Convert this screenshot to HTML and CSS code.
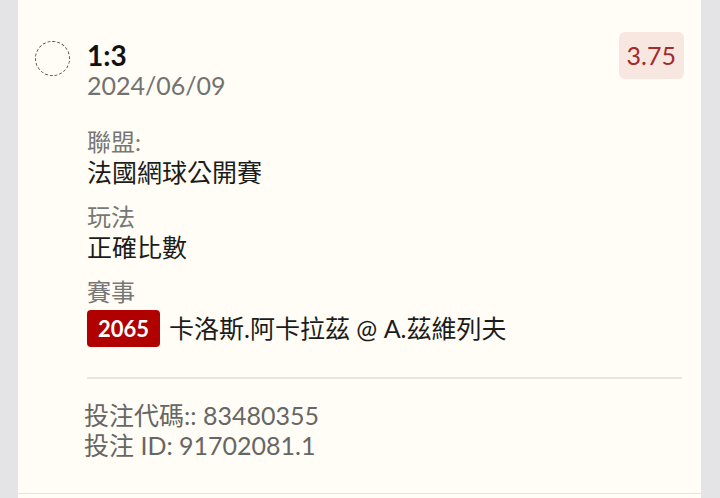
FILE: index.html
```html
<!DOCTYPE html>
<html lang="zh-Hant">
<head>
  <meta charset="UTF-8" />
  <meta name="viewport" content="width=device-width, initial-scale=1.0"/>
  <title>投注紀錄</title>
  <link rel="stylesheet" href="styles.css">
</head>
<body>

  <div class="bet-card">
    <div class="bet-head">
      <div class="check"></div>
      <div class="bet-title">
        <div class="score">1:3</div>
        <div class="date">2024/06/09</div>
      </div>
      <div class="odds">3.75</div>
    </div>

    <div class="fields">
      <div class="field">
        <div class="label">聯盟:</div>
        <div class="value">法國網球公開賽</div>
      </div>
      <div class="field">
        <div class="label">玩法</div>
        <div class="value">正確比數</div>
      </div>
      <div class="field">
        <div class="label">賽事</div>
        <div class="event">
          <span class="event-id">2065</span>
          <span class="value">卡洛斯.阿卡拉茲 @ A.茲維列夫</span>
        </div>
      </div>
    </div>

    <hr class="divider">

    <div class="bet-meta">
      <div>投注代碼:: 83480355</div>
      <div>投注 ID: 91702081.1</div>
    </div>
  </div>

  <div class="bet-card next"></div>

</body>
</html>
```

FILE: styles.css
```css
body {
  margin: 0;
  background-color: #e4e4e6;
  font-family: "Lato", "Noto Sans CJK TC", sans-serif;
  color: #1c1c1c;
}

.bet-card {
  margin: 0 19px 0 18px;
  background-color: #fffdf5;
  border-bottom: 1px solid #e4e2da;
  padding: 32px 17px 0 17px;
  height: 461px;
}

.bet-card.next {
  height: 40px;
  padding: 0;
  border: none;
}

.bet-head {
  display: flex;
  align-items: flex-start;
}

.check {
  width: 33px;
  height: 33px;
  margin-top: 9px;
  border: 1px dashed #555;
  border-radius: 50%;
  flex-shrink: 0;
}

.bet-title {
  flex: 1;
  margin-left: 17px;
  margin-top: 8px;
}

.score {
  font-size: 28px;
  font-weight: 700;
  line-height: 30px;
  color: #111;
}

.date {
  font-size: 25px;
  line-height: 30px;
  color: #727272;
}

.odds {
  background-color: #f8e7e1;
  color: #a52a2a;
  font-size: 25px;
  line-height: 47px;
  padding: 0 8px;
  border-radius: 6px;
}

.fields {
  margin: 26px 0 0 52px;
}

.field + .field {
  margin-top: 13px;
}

.label {
  font-size: 24px;
  line-height: 31px;
  color: #777;
}

.value {
  font-size: 25px;
  line-height: 31px;
}

.event {
  display: flex;
  align-items: center;
  margin-top: 3px;
}

.event-id {
  background-color: #b10000;
  color: #fff;
  font-size: 22px;
  font-weight: 700;
  line-height: 37px;
  padding: 0 11px;
  border-radius: 4px;
  margin-right: 9px;
}

.divider {
  border: none;
  border-top: 2px solid #e8e6de;
  margin: 30px 2px 0 52px;
}

.bet-meta {
  margin: 21px 0 0 49px;
  font-size: 25px;
  line-height: 30px;
  color: #666;
}
```
